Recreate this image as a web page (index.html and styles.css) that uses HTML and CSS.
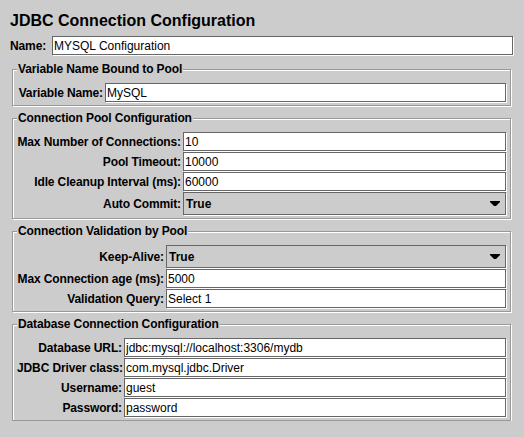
FILE: index.html
```html
<!DOCTYPE html>
<html>
<head>
<meta charset="utf-8">
<link rel="stylesheet" href="styles.css">
</head>
<body>
<div class="panel">
  <h1 class="title">JDBC Connection Configuration</h1>
  <div class="name-row">
    <label class="lbl-left">Name:</label>
    <input class="field" type="text" value="MYSQL Configuration">
  </div>

  <fieldset class="group">
    <legend>Variable Name Bound to Pool</legend>
    <div class="grid g1">
      <label class="lbl">Variable Name:</label>
      <input class="field" type="text" value="MySQL">
    </div>
  </fieldset>

  <fieldset class="group">
    <legend>Connection Pool Configuration</legend>
    <div class="grid g2">
      <label class="lbl">Max Number of Connections:</label>
      <input class="field" type="text" value="10">
      <label class="lbl">Pool Timeout:</label>
      <input class="field" type="text" value="10000">
      <label class="lbl">Idle Cleanup Interval (ms):</label>
      <input class="field" type="text" value="60000">
      <label class="lbl">Auto Commit:</label>
      <div class="combo"><span class="combo-text">True</span><svg class="arrow" width="10" height="5" viewBox="0 0 10 5"><polygon points="0,0 10,0 10,1 6,5 4,5 0,1" fill="#000"/></svg></div>
    </div>
  </fieldset>

  <fieldset class="group">
    <legend>Connection Validation by Pool</legend>
    <div class="grid g3">
      <label class="lbl">Keep-Alive:</label>
      <div class="combo"><span class="combo-text">True</span><svg class="arrow" width="10" height="5" viewBox="0 0 10 5"><polygon points="0,0 10,0 10,1 6,5 4,5 0,1" fill="#000"/></svg></div>
      <label class="lbl">Max Connection age (ms):</label>
      <input class="field" type="text" value="5000">
      <label class="lbl">Validation Query:</label>
      <input class="field" type="text" value="Select 1">
    </div>
  </fieldset>

  <fieldset class="group">
    <legend>Database Connection Configuration</legend>
    <div class="grid g4">
      <label class="lbl">Database URL:</label>
      <input class="field" type="text" value="jdbc:mysql://localhost:3306/mydb">
      <label class="lbl">JDBC Driver class:</label>
      <input class="field" type="text" value="com.mysql.jdbc.Driver">
      <label class="lbl">Username:</label>
      <input class="field" type="text" value="guest">
      <label class="lbl">Password:</label>
      <input class="field" type="text" value="password">
    </div>
  </fieldset>
</div>
</body>
</html>
```

FILE: styles.css
```css
html, body {
  margin: 0;
  padding: 0;
  background: #cccccc;
}

body {
  font-family: "Liberation Sans", Arial, sans-serif;
  font-size: 12px;
  color: #000;
}

.panel {
  display: flex;
  flex-direction: column;
  padding: 11px 11px 0 10px;
}

.title {
  margin: 0 0 5px 0;
  font-size: 16px;
  font-weight: bold;
  line-height: 20px;
  color: #000;
}

.name-row {
  display: grid;
  grid-template-columns: 41px 1fr;
  column-gap: 1px;
  align-items: center;
}

.lbl-left,
.lbl {
  font-weight: bold;
  line-height: 14px;
  white-space: nowrap;
  letter-spacing: -0.12px;
}

.lbl {
  text-align: right;
  padding-right: 1px;
}

.field {
  box-sizing: border-box;
  height: 19px;
  width: 100%;
  margin: 0;
  padding: 0 0 0 1px;
  border: 1px solid #666666;
  box-shadow: 1px 1px 0 #ffffff;
  background: #ffffff;
  font-family: inherit;
  font-size: 12px;
  color: #000;
  outline: none;
}

.group {
  margin: 5px 2px 0 2px;
  padding: 6px 4px 3px 4px;
  border: 1px solid #999999;
  box-shadow: inset 1px 1px 0 #ffffff, 1px 1px 0 #ffffff;
  min-inline-size: 0;
}

.name-row + .group {
  margin-top: 7px;
}

.group legend {
  padding: 0 1px;
  font-weight: bold;
  line-height: 15px;
  letter-spacing: -0.12px;
  background: #cccccc;
}

.grid {
  display: grid;
  column-gap: 1px;
  row-gap: 1px;
  align-items: center;
}

.g1 { grid-template-columns: 87px 1fr; }
.g2 { grid-template-columns: 165px 1fr; }
.g3 { grid-template-columns: 148px 1fr; }
.g4 { grid-template-columns: 106px 1fr; }

.combo {
  box-sizing: border-box;
  height: 23px;
  display: flex;
  align-items: center;
  justify-content: space-between;
  padding: 0 5px 0 2px;
  border: 1px solid #666666;
  box-shadow: 1px 1px 0 #ffffff;
  background: #cccccc;
}

.combo-text {
  font-weight: bold;
  line-height: 14px;
}

.arrow {
  display: block;
}
```
